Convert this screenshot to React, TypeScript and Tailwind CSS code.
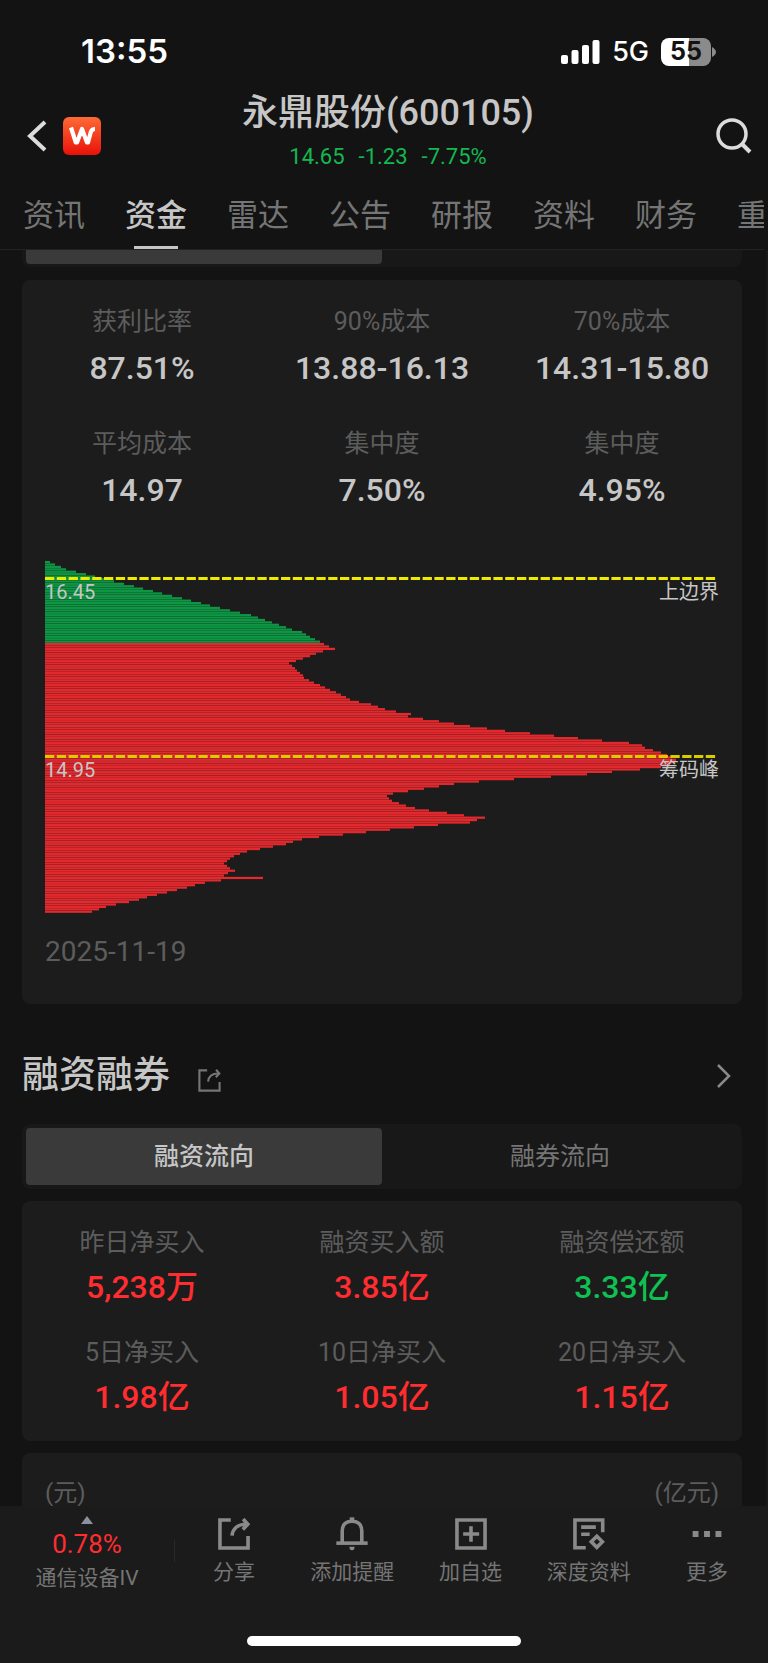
import { useState } from 'react'

interface Stat {
  label: string
  value: string
  tone?: 'up' | 'down'
}

const TABS = ['资讯', '资金', '雷达', '公告', '研报', '资料', '财务', '重']

const COST_STATS: Stat[] = [
  { label: '获利比率', value: '87.51%' },
  { label: '90%成本', value: '13.88-16.13' },
  { label: '70%成本', value: '14.31-15.80' },
  { label: '平均成本', value: '14.97' },
  { label: '集中度', value: '7.50%' },
  { label: '集中度', value: '4.95%' },
]

const MARGIN_STATS: Stat[] = [
  { label: '昨日净买入', value: '5,238万', tone: 'up' },
  { label: '融资买入额', value: '3.85亿', tone: 'up' },
  { label: '融资偿还额', value: '3.33亿', tone: 'down' },
  { label: '5日净买入', value: '1.98亿', tone: 'up' },
  { label: '10日净买入', value: '1.05亿', tone: 'up' },
  { label: '20日净买入', value: '1.15亿', tone: 'up' },
]

// Chip volume per price level, highest price first
const LOSS_CHIPS = [
  5, 10, 16, 21, 31, 41, 50, 59, 69, 79, 89, 98, 108, 117, 127, 137, 146, 156, 165, 175, 185, 195,
  206, 213, 220, 227, 234, 241, 247, 257, 261, 265, 270, 275,
]
const PROFIT_CHIPS = [
  279, 284, 290, 278, 271, 265, 258, 251, 244, 247, 250, 252, 255, 258, 259, 264, 269, 275, 280,
  285, 291, 296, 301, 305, 314, 326, 333, 340, 351, 366, 363, 378, 394, 409, 425, 442, 460, 485,
  509, 533, 557, 584, 597, 600, 608, 616, 622, 627, 631, 630, 625, 616, 595, 567, 542, 506, 469,
  434, 409, 394, 379, 363, 348, 342, 344, 347, 354, 361, 370, 384, 402, 419, 440, 432, 425, 393,
  369, 345, 321, 298, 274, 257, 248, 241, 228, 215, 202, 195, 189, 185, 182, 179, 182, 185, 190,
  183, 179, 218, 176, 160, 150, 142, 132, 122, 112, 102, 94, 84, 71, 61, 54, 47,
]

function StatGrid({ stats, className }: { stats: Stat[]; className: string }) {
  return (
    <dl className={`grid grid-cols-3 text-center ${className}`}>
      {stats.map((s, i) => (
        <div key={i} className="flex flex-col">
          <dt className="text-[25px] leading-9 text-[#5c5c5c]">{s.label}</dt>
          <dd
            className={`text-[32px] leading-10 font-medium ${
              s.tone === 'up' ? 'text-[#ff2d30]' : s.tone === 'down' ? 'text-[#0fc152]' : 'text-[#c6c6c6]'
            }`}
          >
            {s.value}
          </dd>
        </div>
      ))}
    </dl>
  )
}

function ChipChart() {
  const chips = [...LOSS_CHIPS, ...PROFIT_CHIPS]
  const step = 352 / chips.length

  return (
    <div className="relative">
      <svg viewBox="0 0 674 352" preserveAspectRatio="none" className="block w-full h-[352px]">
        {chips.map((w, i) => (
          <rect
            key={i}
            x="0"
            y={i * step}
            width={w}
            height={step * 0.93}
            fill={i < LOSS_CHIPS.length ? '#0d9643' : '#e3292d'}
          />
        ))}
        <line x1="0" x2="671" y1="17.5" y2="17.5" stroke="#eeea00" strokeWidth="3" strokeDasharray="9.3 2.5" />
        <line x1="0" x2="671" y1="195.5" y2="195.5" stroke="#d9cc00" strokeWidth="3" strokeDasharray="9.3 2.5" />
      </svg>
      <div className="absolute inset-x-0 top-[19px] flex justify-between text-xl leading-6 text-[#c6c6c6]">
        <span>16.45</span>
        <span>上边界</span>
      </div>
      <div className="absolute inset-x-0 top-[197px] flex justify-between text-xl leading-6 text-[#c6c6c6]">
        <span>14.95</span>
        <span>筹码峰</span>
      </div>
    </div>
  )
}

function ShareIcon({ className, thin }: { className: string; thin?: boolean }) {
  return (
    <svg viewBox="0 0 98 98" fill="none" stroke="currentColor" strokeWidth={thin ? 9 : 11} className={className}>
      <path d="M39 6H6V92H92V55" />
      <path d="M43 54C45 33 60 19 86 19" />
      <path d="M77 3L91 19L76 35" />
    </svg>
  )
}

function BellIcon() {
  return (
    <svg viewBox="0 0 98 98" fill="none" stroke="currentColor" strokeWidth="11" className="size-8 overflow-visible">
      <path d="M19 76V40C19 21 30 10 49 10C68 10 79 21 79 40V76" />
      <path d="M1 77H97" />
      <path d="M42 -2h14v8h-14z" fill="currentColor" stroke="none" />
      <path d="M41 88h16a8 11 0 0 1 -16 0z" fill="currentColor" stroke="none" />
    </svg>
  )
}

function AddIcon() {
  return (
    <svg viewBox="0 0 98 98" fill="none" stroke="currentColor" strokeWidth="11" className="size-8">
      <path d="M6 6H92V92H6zM25 49H74M49 25V73" />
    </svg>
  )
}

function DocIcon() {
  return (
    <svg viewBox="0 0 98 98" fill="none" stroke="currentColor" strokeWidth="11" className="size-8">
      <path d="M39 91H6V6H91V44" />
      <path d="M25 28H70M25 50H51" />
      <path d="M73 56L90 73L73 90L56 73z" />
    </svg>
  )
}

function MoreIcon() {
  return (
    <svg viewBox="0 0 98 98" fill="currentColor" className="size-8">
      <path d="M5 40h18v18H5zM40 40h18v18H40zM75 40h18v18H75z" />
    </svg>
  )
}

const ACTIONS = [
  { label: '分享', icon: <ShareIcon className="size-8" /> },
  { label: '添加提醒', icon: <BellIcon /> },
  { label: '加自选', icon: <AddIcon /> },
  { label: '深度资料', icon: <DocIcon /> },
  { label: '更多', icon: <MoreIcon /> },
]

export default function App() {
  const [tab, setTab] = useState('资金')
  const [flow, setFlow] = useState('融资流向')

  return (
    <div className="flex h-screen flex-col overflow-hidden bg-[#131313] font-[Roboto,'Noto_Sans_CJK_SC',sans-serif] text-[#c6c6c6]">
      {/* Status bar */}
      <div className="flex h-[92px] shrink-0 items-center justify-between pt-3 pl-[81px] pr-[52px] font-[Inter,sans-serif] text-white">
        <span className="text-[33px] font-semibold">13:55</span>
        <div className="flex items-center">
          <svg viewBox="0 0 39 24" fill="currentColor" className="h-6 w-[39px]">
            <rect x="0" y="15" width="7" height="9" rx="2" />
            <rect x="10.5" y="10" width="7" height="14" rx="2" />
            <rect x="21" y="5" width="7" height="19" rx="2" />
            <rect x="31.5" y="0" width="7" height="24" rx="2" />
          </svg>
          <span className="ml-3 text-[27px] font-medium">5G</span>
          <div className="ml-3 flex h-7 w-[50px] items-center justify-center rounded-lg bg-linear-to-r from-white from-55% to-[#8b8b8b] to-55% text-[25px] font-bold text-[#131313]">
            55
          </div>
          <svg viewBox="0 0 4 10" className="ml-px h-2.5 w-1" fill="#8b8b8b">
            <path d="M0 0C2 1 4 3 4 5S2 9 0 10z" />
          </svg>
        </div>
      </div>

      {/* Title */}
      <header className="flex h-[88px] shrink-0 items-center justify-between pl-6 pr-4">
        <div className="flex w-28 items-center gap-[15px]">
          <button aria-label="返回">
            <svg viewBox="0 0 24 36" fill="none" stroke="#dcdcdc" strokeWidth="4" className="h-9 w-6">
              <path d="M21 4L6 18L21 32" />
            </svg>
          </button>
          <a href="#" aria-label="主页">
            <svg viewBox="0 0 38 38" className="size-[38px]">
              <defs>
                <linearGradient id="logo" x1="0" y1="0" x2="0" y2="1">
                  <stop offset="0" stopColor="#ff6a35" />
                  <stop offset="1" stopColor="#e8110a" />
                </linearGradient>
              </defs>
              <rect width="38" height="38" rx="6" fill="url(#logo)" />
              <path
                d="M8 10.500L12.800 25.500H14L19 12L24 25.500H25L27.800 15Q28.800 12 32 12"
                fill="none"
                stroke="#fff"
                strokeWidth="4.200"
                strokeLinejoin="round"
              />
            </svg>
          </a>
        </div>
        <div className="flex flex-col items-center pb-1.5">
          <h1 className="text-4xl leading-[48px] font-medium">永鼎股份(600105)</h1>
          <p className="flex gap-3.5 text-[22px] leading-10 text-[#14b850]">
            <span>14.65</span>
            <span>-1.23</span>
            <span>-7.75%</span>
          </p>
        </div>
        <div className="flex w-28 justify-end">
          <button aria-label="搜索">
            <svg viewBox="0 0 36 36" fill="none" stroke="#dcdcdc" strokeWidth="3.500" className="size-9">
              <circle cx="16" cy="16" r="14" />
              <path d="M26 26L34 34" strokeWidth="4" />
            </svg>
          </button>
        </div>
      </header>

      {/* Tabs */}
      <nav className="mr-1 flex h-[70px] shrink-0 gap-10 overflow-hidden border-b border-[#222222] pl-[23px]">
        {TABS.map(t => (
          <button
            key={t}
            onClick={() => setTab(t)}
            className={`flex shrink-0 flex-col items-center justify-between text-[31px] leading-[72px] ${
              t === tab ? 'font-medium' : 'text-[#757575]'
            }`}
          >
            <span className="h-[66px]">{t}</span>
            {t === tab && <span className="h-[3px] w-11 bg-[#c6c6c6]" />}
          </button>
        ))}
      </nav>

      {/* Content */}
      <main className="min-h-0 flex-1 overflow-hidden border-r-2 border-[#191919] pl-[22px] pr-6">
        <div className="flex h-[17px] rounded-b-lg bg-[#181818] px-1 pb-[3px]">
          <div className="w-1/2 rounded-b-sm bg-[#3a3a3a]" />
        </div>

        <section className="mt-[13px] rounded-lg bg-[#1c1c1c] pt-6 pb-9">
          <StatGrid stats={COST_STATS} className="gap-y-[38px] [&>div]:gap-2" />
          <div className="mt-[51px] px-[23px]">
            <ChipChart />
            <p className="mt-[23px] text-[28px] leading-8 text-[#5c5c5c]">2025-11-19</p>
          </div>
        </section>

        <div className="flex h-[120px] items-center justify-between pt-6 pr-2.5">
          <div className="flex items-center gap-7">
            <h2 className="text-[37px] leading-[48px] font-medium">融资融券</h2>
            <button aria-label="分享" className="pt-2 text-[#757575]">
              <ShareIcon className="size-[23px]" thin />
            </button>
          </div>
          <button aria-label="查看更多">
            <svg viewBox="0 0 16 26" fill="none" stroke="#8a8a8a" strokeWidth="2.500" className="h-[26px] w-4">
              <path d="M2 2L13 13L2 24" />
            </svg>
          </button>
        </div>

        <div className="flex h-[65px] rounded-lg bg-[#181818] p-1 text-[25px]">
          {['融资流向', '融券流向'].map(f => (
            <button
              key={f}
              onClick={() => setFlow(f)}
              className={`flex-1 rounded-sm ${f === flow ? 'bg-[#3a3a3a] font-medium' : 'text-[#757575]'}`}
            >
              {f}
            </button>
          ))}
        </div>

        <section className="mt-3 rounded-lg bg-[#1c1c1c] pt-6 pb-6">
          <StatGrid stats={MARGIN_STATS} className="gap-y-7 [&>div]:gap-1.5" />
        </section>

        <section className="mt-3 flex justify-between rounded-t-lg bg-[#1c1c1c] px-[23px] pt-6 pb-10 text-2xl leading-8 text-[#5c5c5c]">
          <span>(元)</span>
          <span>(亿元)</span>
        </section>
      </main>

      {/* Bottom bar */}
      <footer className="flex h-[157px] shrink-0 flex-col justify-between bg-[#1b1b1b] pb-[17px]">
        <div className="flex pr-0.5 text-[21px] leading-8 text-[#757575]">
          <a href="#" className="flex w-[174px] flex-col items-center pt-2.5">
            <svg viewBox="0 0 12 8" className="h-2 w-3" fill="#8a929e">
              <path d="M6 0L12 8H0z" />
            </svg>
            <span className="mt-1 text-[26px] leading-8 text-[#ff2d30]">0.78%</span>
            <span className="mt-0.5">通信设备IV</span>
          </a>
          <div className="mt-[34px] h-[22px] w-px bg-[#2a2a2a]" />
          {ACTIONS.map(a => (
            <button key={a.label} className="flex flex-1 flex-col items-center gap-1.5 pt-3">
              <span className="text-[#8a8a8a]">{a.icon}</span>
              <span>{a.label}</span>
            </button>
          ))}
        </div>
        <div className="h-2.5 w-[274px] self-center rounded-full bg-white" />
      </footer>
    </div>
  )
}
